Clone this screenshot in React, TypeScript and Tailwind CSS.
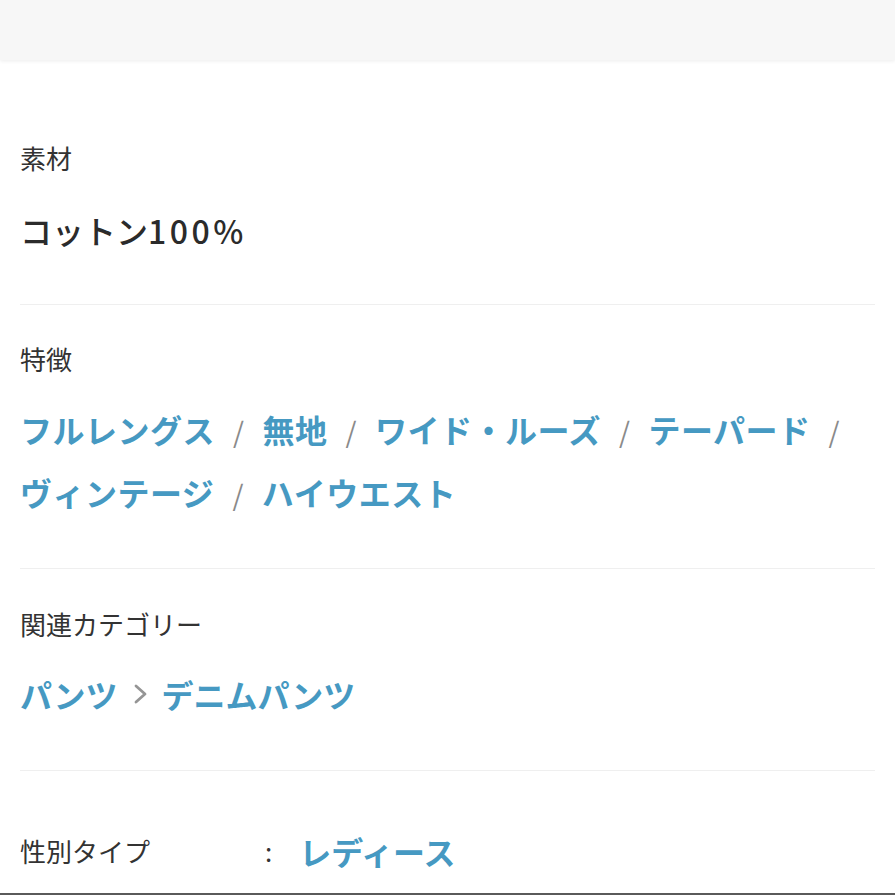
import React from "react";

const FEATURES = ["フルレングス", "無地", "ワイド・ルーズ", "テーパード", "ヴィンテージ", "ハイウエスト"];

const Label = ({ children }: { children: React.ReactNode }) => (
  <div className="text-[26px] leading-[36px] text-[#333]">{children}</div>
);

const Chevron = () => (
  <svg width="14" height="22" viewBox="0 0 14 22" className="ml-[16px] mr-[14px]">
    <polyline points="2,3 11,11 2,19" fill="none" stroke="#959595" strokeWidth="2.8" strokeLinecap="round" strokeLinejoin="round" />
  </svg>
);

export default function App() {
  return (
    <div
      className="w-[895px] h-[895px] bg-white overflow-hidden flex flex-col"
      style={{ fontFamily: '"Noto Sans CJK JP", "Noto Sans", sans-serif' }}
    >
      <div className="h-[60px] shrink-0 bg-[#f7f7f7] shadow-[0_1px_4px_rgba(0,0,0,0.08)]" />

      <div className="px-[20px] flex-1 flex flex-col">
        {/* 素材 */}
        <section className="pt-[80px] pb-[44px] border-b border-[#efefef]">
          <Label>素材</Label>
          <div className="mt-[24px] text-[32px] leading-[60px] font-medium text-[#2b2b2b]">
            コットン<span className="tracking-[3.5px]">100%</span>
          </div>
        </section>

        {/* 特徴 */}
        <section className="pt-[36px] pb-[43px] border-b border-[#efefef]">
          <Label>特徴</Label>
          <div className="mt-[22px] flex flex-wrap text-[32px] leading-[61px] font-bold text-[#4699c2] tracking-[0.5px]">
            {FEATURES.map((f, i) => (
              <span key={f} className="whitespace-nowrap">
                {f}
                {i < FEATURES.length - 1 && (
                  <span className="inline-block px-[18px] font-normal text-[28px] text-[#8a8a8a]">/</span>
                )}
              </span>
            ))}
          </div>
        </section>

        {/* 関連カテゴリー */}
        <section className="pt-[37px] pb-[46px] border-b border-[#efefef]">
          <Label>関連カテゴリー</Label>
          <div className="mt-[22px] flex items-center text-[32px] leading-[60px] font-bold text-[#4699c2]">
            <span>パンツ</span>
            <Chevron />
            <span>デニムパンツ</span>
          </div>
        </section>

        {/* 性別タイプ */}
        <div className="pt-[50px] flex items-center">
          <div className="w-[245px] text-[26px] leading-[60px] text-[#333]">性別タイプ</div>
          <div className="text-[26px] leading-[60px] text-[#333]">:</div>
          <div className="ml-[27px] text-[32px] leading-[60px] font-bold text-[#4699c2]">レディース</div>
        </div>
      </div>

      <div className="h-[2px] shrink-0 bg-[#5a5a5a]" />
    </div>
  );
}
